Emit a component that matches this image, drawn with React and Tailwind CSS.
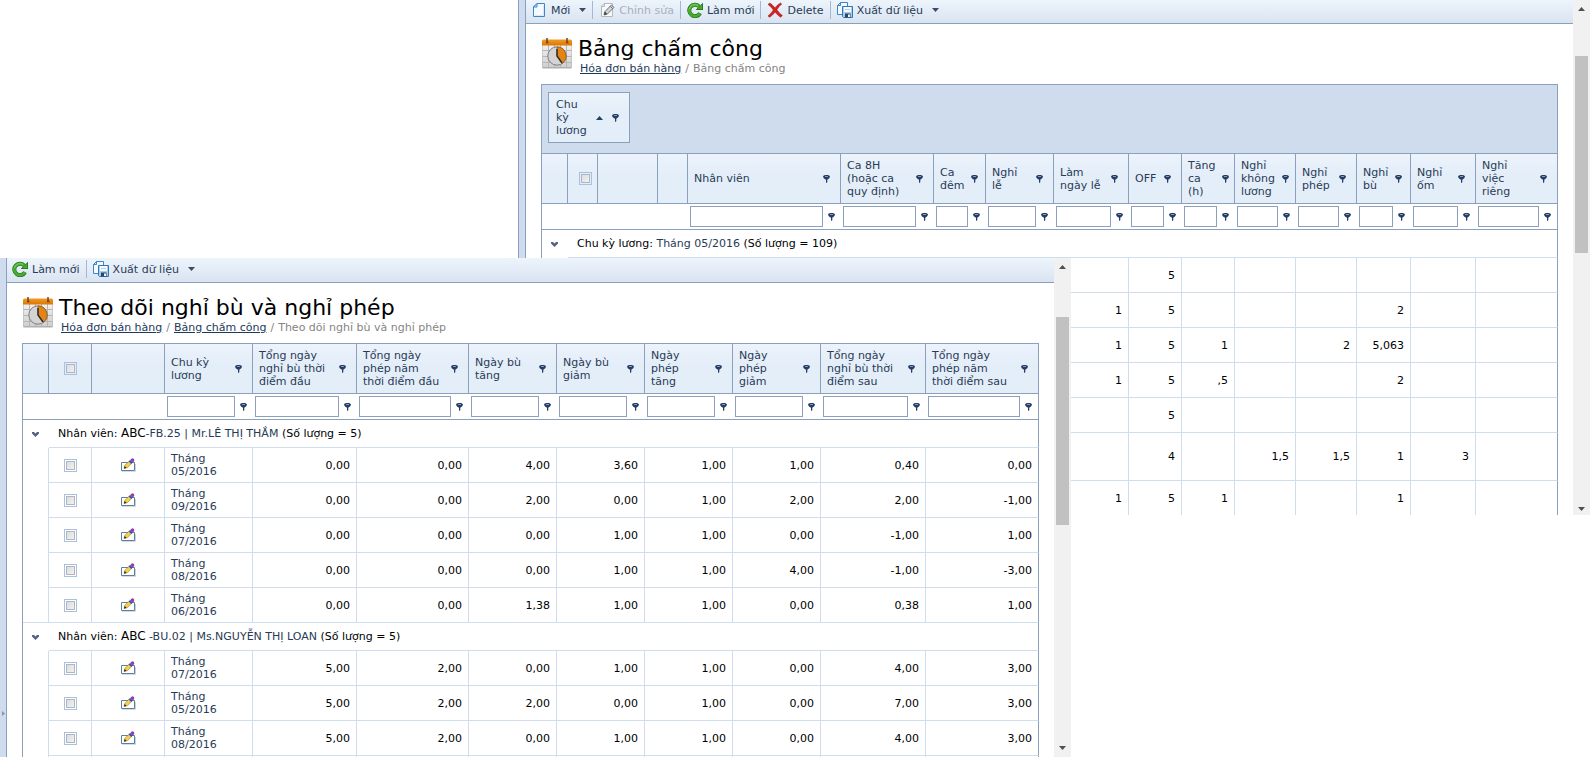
import React from "react";

/* ---------- icons ---------- */

function FilterIcon() {
  return (
    <svg width="7" height="8" viewBox="0 0 7 8" aria-hidden="true">
      <path d="M2 0h3q2 .4 2 1.800Q6.600 3.600 4.600 4.600H2.400Q.400 3.600 0 1.800 0 .4 2 0z" fill="#243c66" />
      <path d="M2 1h3v.700h-3z" fill="#b4c6e0" />
      <path d="M3 4h1.300v3.200L3 8z" fill="#243c66" />
    </svg>
  );
}

function Caret() {
  return (
    <svg width="7" height="4" viewBox="0 0 7 4" aria-hidden="true">
      <path d="M0 0h7L3.5 4z" fill="#3f4b66" />
    </svg>
  );
}

function SortUp() {
  return (
    <svg width="7" height="4" viewBox="0 0 7 4" aria-hidden="true">
      <path d="M0 4h7L3.5 0z" fill="#243c66" />
    </svg>
  );
}

function Chevron() {
  return (
    <svg width="7" height="5" viewBox="0 0 7 5" aria-hidden="true">
      <path d="M0 0h2l1.5 1.5L5 0h2v1.5L3.5 5 0 1.5z" fill="#55617f" />
    </svg>
  );
}

function NewIcon() {
  return (
    <svg width="16" height="16" viewBox="0 0 16 16" aria-hidden="true">
      <path d="M6 1.500h7.500v13h-11V5z" fill="#f4faff" stroke="#3f86c6" />
      <path d="M2.500 5H6V1.500z" fill="#d3e6f7" stroke="#3f86c6" strokeLinejoin="round" />
      <path d="M4 13.500h8.500V3" fill="none" stroke="#d6e9f9" />
    </svg>
  );
}

function EditGrayIcon() {
  return (
    <svg width="16" height="16" viewBox="0 0 16 16" aria-hidden="true">
      <path d="M5 1.500h8.500v13h-11V4z" fill="#f8f9fa" stroke="#b4b8bd" />
      <path d="M2.500 4.500h3v-3" fill="#e2e4e7" stroke="#b4b8bd" />
      <path d="M5 13l.900-3.400L12.400 3l2.600 2.400-6.700 6.700z" fill="#d2d4d7" stroke="#6f7378" />
      <path d="M5 13l.900-3.400 2.400 2.500z" fill="#3f4347" />
      <path d="M11.200 4.200l2.500 2.500" stroke="#6f7378" />
    </svg>
  );
}

function RefreshIcon() {
  return (
    <svg width="16" height="16" viewBox="0 0 16 16" aria-hidden="true">
      <path d="M12 4.400A5.700 5.700 0 1 0 13 11.200" fill="none" stroke="#1f6d16" strokeWidth="4" />
      <path d="M16 .800V8H8.600z" fill="#1f6d16" />
      <path d="M12 4.400A5.700 5.700 0 1 0 13 11.200" fill="none" stroke="#46ad2e" strokeWidth="2.800" />
      <path d="M15.300 2.600V7.300H10.400z" fill="#46ad2e" />
      <path d="M11 3.400A6 6 0 0 0 2.200 7" fill="none" stroke="#86cf6c" strokeWidth="1" />
    </svg>
  );
}

function DeleteIcon() {
  return (
    <svg width="16" height="16" viewBox="0 0 16 16" aria-hidden="true">
      <path
        d="M1 2.400 2.800 1C4.800 2.300 6.600 4 8 5.900 9.600 3.800 11.400 2.100 13.600 1L14.700 2C12.800 3.600 11.200 5.500 9.900 7.700 11.400 9.900 13.200 11.900 15.400 13.600L13.500 15.200C11.400 13.800 9.600 12 8.100 10.100 6.600 12.100 4.800 13.900 2.700 15.200L1 14C3 12.200 4.900 10.200 6.300 7.900 4.900 5.800 3.100 4 1 2.400z"
        fill="#d3201f"
        stroke="#9c1110"
        strokeWidth="0.5"
      />
    </svg>
  );
}

function ExportIcon() {
  return (
    <svg width="16" height="16" viewBox="0 0 16 16" aria-hidden="true">
      <path d="M3.500 0.500h7v12h-10v-9z" fill="#f4f9fe" stroke="#3f86c6" />
      <path d="M0.500 3.500h3v-3z" fill="#cfe2f5" stroke="#3f86c6" />
      <path d="M5.500 4.500h10v11h-9l-1-1z" fill="#a9cdef" stroke="#2f78bd" />
      <rect x="7" y="5" width="7" height="5" fill="#f6fafe" />
      <path d="M8 7.500h5" stroke="#b5cfe8" />
      <path d="M8 11.500h5.500v4H8z" fill="#2b4662" />
      <rect x="11" y="12.500" width="2" height="2.500" fill="#eef3f8" />
    </svg>
  );
}

function EditRowIcon() {
  return (
    <svg width="15" height="14" viewBox="0 0 15 14" aria-hidden="true">
      <path d="M1 13.300h13.500V6" fill="none" stroke="#c9d3dc" />
      <path d="M0.500 4.500h13v8H0.500z" fill="#fff" stroke="#5f7f9b" />
      <path d="M3 10.500l.900-3.300 4.500-4.400 2.600 2.500-4.600 4.400z" fill="#f6cf45" stroke="#6b5a2e" strokeWidth="0.400" />
      <path d="M3 10.500l.700-2.400 1.800 1.800z" fill="#1c1c1c" />
      <path d="M7.600 3.500l1.700-1.600 2.600 2.500-1.700 1.600z" fill="#2b55cf" />
      <path d="M9.300 1.900l1.100-1.100q1.200-.900 2.200 0t.400 2.400L11.900 4.400z" fill="#9b3aa0" />
    </svg>
  );
}

function CalendarIcon({ id }) {
  return (
    <svg width="32" height="32" viewBox="0 0 32 32" aria-hidden="true">
      <defs>
        <linearGradient id={id} x1="0" y1="0" x2="0" y2="1">
          <stop offset="0" stopColor="#f39a25" />
          <stop offset="1" stopColor="#dc7503" />
        </linearGradient>
        <linearGradient id={`${id}-paper`} x1="0" y1="0" x2="0" y2="1">
          <stop offset="0" stopColor="#f1f1f1" />
          <stop offset="1" stopColor="#cfcfcf" />
        </linearGradient>
      </defs>
      <rect x="1" y="5" width="30" height="26.500" rx="1.500" fill="#b0b0b0" />
      <rect x="1.500" y="8" width="29" height="22" fill={`url(#${id}-paper)`} />
      <path d="M1.500 13.500h29M1.500 19.500h29M1.500 25.500h29M7.500 8v22M13.500 8v22M19.500 8v22M25.500 8v22" stroke="#b5b5b5" />
      <path d="M1 8.500V4q0-1.500 1.500-1.500h27Q31 2.500 31 4v4.500z" fill={`url(#${id})`} />
      <path d="M6 1v4M26 1v4" stroke="#5a4a3a" strokeWidth="1.500" />
      <path d="M5 5.500h2.500M25 5.500h2.500" stroke="#7a4400" strokeWidth="1.500" />
      <circle cx="16" cy="19" r="9.200" fill="#d4d4d4" stroke="#7c7c7c" />
      <path d="M16 19V10a9 9 0 0 1 5.400 16.200z" fill="#e58414" stroke="#8a5312" strokeWidth="0.700" />
      <path d="M16 12v7l5 7" fill="none" stroke="#2f2f2f" strokeWidth="1.500" />
    </svg>
  );
}

/* ---------- shared parts ---------- */

function ToolButton({ icon, label, menu, disabled }) {
  return (
    <button
      type="button"
      disabled={disabled}
      className="flex h-[18px] items-center gap-1 text-[#283b56] disabled:text-[#a9b0ba]"
    >
      {icon}
      <span>{label}</span>
      {menu && (
        <span className="pl-[5px]">
          <Caret />
        </span>
      )}
    </button>
  );
}

function Toolbar({ items, className }) {
  return (
    <div
      role="toolbar"
      className={`flex items-start gap-[6px] border-b border-[#8ba0bc] bg-linear-to-b from-[#edf4fc] to-[#d9e4f1] pl-[5px] ${className}`}
    >
      {items.map((item, i) => (
        <React.Fragment key={item.label}>
          {i > 0 && <div className="h-[18px] w-px bg-[#a3b8d6]" />}
          <ToolButton {...item} />
        </React.Fragment>
      ))}
    </div>
  );
}

function PageTitle({ id, title, links, current }) {
  return (
    <header className="flex h-[60px] gap-[5px] pt-[13px]">
      <CalendarIcon id={id} />
      <div>
        <h1 className="text-[22px] leading-[24px] text-black">{title}</h1>
        <nav className="pl-[2px] leading-[16px] text-[#848484]">
          {links.map((link) => (
            <React.Fragment key={link}>
              <a href="#" className="text-[#1e395b] underline">
                {link}
              </a>
              <span className="px-1">/</span>
            </React.Fragment>
          ))}
          <span>{current}</span>
        </nav>
      </div>
    </header>
  );
}

function Tick({ label }) {
  return (
    <input
      type="checkbox"
      aria-label={label}
      className="mx-auto block size-[9px] appearance-none border border-[#b1b5bd] bg-linear-to-br from-[#dcdde0] to-[#f1f1f1] outline-1 outline-offset-1 outline-[#a9c0e0]"
    />
  );
}

function ScrollBar({ thumb, className }) {
  return (
    <div className={`flex w-[17px] shrink-0 flex-col bg-[#f1f1f1] ${className}`} aria-hidden="true">
      <svg width="17" height="17" viewBox="0 0 17 17" className="shrink-0">
        <path d="M5 11h7L8.500 7z" fill="#505050" />
      </svg>
      <div className={`mx-[2px] bg-[#c1c1c1] ${thumb}`} />
      <div className="grow" />
      <svg width="17" height="17" viewBox="0 0 17 17" className="shrink-0">
        <path d="M5 6h7L8.500 10z" fill="#505050" />
      </svg>
    </div>
  );
}

function Grid({ columns, children }) {
  const last = columns.length - 1;
  return (
    <table className="w-full table-fixed border-separate border-spacing-0">
      <colgroup>
        {columns.map((c, i) => (
          <col key={i} className={c.width} />
        ))}
      </colgroup>
      <thead>
        <tr>
          {columns.map((c, i) => (
            <th
              key={i}
              scope="col"
              className={`h-[50px] border-r border-b border-[#8ba0bc] bg-linear-to-b from-[#ecf3fb] to-[#e4eef9] to-40% py-0 pr-0 text-left font-normal text-[#283b56] ${c.tickPad ?? "pl-0"}`}
            >
              {c.tick && <Tick label="Chọn tất cả" />}
              {c.title && (
                <div className="flex items-center justify-between gap-[7px] pr-[10px] pl-[6px]">
                  <span className="whitespace-pre">{c.title}</span>
                  <button type="button" aria-label="Lọc" className="shrink-0">
                    <FilterIcon />
                  </button>
                </div>
              )}
            </th>
          ))}
        </tr>
        <tr>
          {columns.map((c, i) => (
            <td
              key={i}
              className={`h-[26px] border-b border-[#8ba0bc] p-0 ${i === last ? "border-r" : ""}`}
            >
              {c.title && (
                <div className="flex items-center pr-px pl-[2px]">
                  <input
                    type="text"
                    aria-label={c.title.replaceAll("\n", " ")}
                    className="h-[21px] w-0 min-w-0 grow border border-[#8ba0bc] bg-white px-1"
                  />
                  <button type="button" aria-label="Điều kiện lọc" className="flex w-[17px] shrink-0 justify-center">
                    <FilterIcon />
                  </button>
                </div>
              )}
            </td>
          ))}
        </tr>
      </thead>
      {children}
    </table>
  );
}

function GroupRow({ span, children }) {
  return (
    <tr>
      <td className="h-[28px] p-0">
        <button type="button" aria-label="Thu gọn" className="ml-[9px] block">
          <Chevron />
        </button>
      </td>
      <td
        colSpan={span}
        className="border-r border-b border-r-[#8ba0bc] border-b-[#cfddee] py-0 pl-[9px] text-black"
      >
        {children}
      </td>
    </tr>
  );
}

function cellBorder(isLast) {
  return isLast
    ? "border-r border-b border-r-[#8ba0bc] border-b-[#cfddee]"
    : "border-r border-b border-[#cfddee]";
}

/* ---------- data ---------- */

const timesheetColumns = [
  { width: "w-[26px]" },
  { width: "w-[30px]", tick: true, tickPad: "pl-[5px]" },
  { width: "w-[60px]" },
  { width: "w-[30px]" },
  { width: "w-[153px]", title: "Nhân viên" },
  { width: "w-[93px]", title: "Ca 8H\n(hoặc ca\nquy định)" },
  { width: "w-[52px]", title: "Ca\nđêm" },
  { width: "w-[68px]", title: "Nghỉ\nlễ" },
  { width: "w-[75px]", title: "Làm\nngày lễ" },
  { width: "w-[53px]", title: "OFF" },
  { width: "w-[53px]", title: "Tăng\nca\n(h)" },
  { width: "w-[61px]", title: "Nghỉ\nkhông\nlương" },
  { width: "w-[61px]", title: "Nghỉ\nphép" },
  { width: "w-[54px]", title: "Nghỉ\nbù" },
  { width: "w-[65px]", title: "Nghỉ\nốm" },
  { width: "w-[82px]", title: "Nghỉ\nviệc\nriêng" },
];

const timesheetRows = [
  { height: "h-[35px]", values: ["", "5", "", "", "", "", "", ""] },
  { height: "h-[35px]", values: ["1", "5", "", "", "", "2", "", ""] },
  { height: "h-[35px]", values: ["1", "5", "1", "", "2", "5,063", "", ""] },
  { height: "h-[35px]", values: ["1", "5", ",5", "", "", "2", "", ""] },
  { height: "h-[35px]", values: ["", "5", "", "", "", "", "", ""] },
  { height: "h-[48px]", values: ["", "4", "", "1,5", "1,5", "1", "3", ""] },
  { height: "h-[35px]", values: ["1", "5", "1", "", "", "1", "", ""] },
];

const leaveColumns = [
  { width: "w-[26px]" },
  { width: "w-[43px]", tick: true },
  { width: "w-[73px]" },
  { width: "w-[88px]", title: "Chu kỳ\nlương" },
  { width: "w-[104px]", title: "Tổng ngày\nnghỉ bù thời\nđiểm đầu" },
  { width: "w-[112px]", title: "Tổng ngày\nphép năm\nthời điểm đầu" },
  { width: "w-[88px]", title: "Ngày bù\ntăng" },
  { width: "w-[88px]", title: "Ngày bù\ngiảm" },
  { width: "w-[88px]", title: "Ngày\nphép\ntăng" },
  { width: "w-[88px]", title: "Ngày\nphép\ngiảm" },
  { width: "w-[105px]", title: "Tổng ngày\nnghỉ bù thời\nđiểm sau" },
  { width: "w-[113px]", title: "Tổng ngày\nphép năm\nthời điểm sau" },
];

const leaveGroups = [
  {
    label: "Nhân viên: ",
    company: "ABC",
    name: "-FB.25 | Mr.LÊ THỊ THẮM",
    complete: true,
    rows: [
      ["05/2016", "0,00", "0,00", "4,00", "3,60", "1,00", "1,00", "0,40", "0,00"],
      ["09/2016", "0,00", "0,00", "2,00", "0,00", "1,00", "2,00", "2,00", "-1,00"],
      ["07/2016", "0,00", "0,00", "0,00", "1,00", "1,00", "0,00", "-1,00", "1,00"],
      ["08/2016", "0,00", "0,00", "0,00", "1,00", "1,00", "4,00", "-1,00", "-3,00"],
      ["06/2016", "0,00", "0,00", "1,38", "1,00", "1,00", "0,00", "0,38", "1,00"],
    ],
  },
  {
    label: "Nhân viên: ",
    company: "ABC",
    name: " -BU.02 | Ms.NGUYỄN THỊ LOAN",
    complete: false,
    rows: [
      ["07/2016", "5,00", "2,00", "0,00", "1,00", "1,00", "0,00", "4,00", "3,00"],
      ["05/2016", "5,00", "2,00", "2,00", "0,00", "1,00", "0,00", "7,00", "3,00"],
      ["08/2016", "5,00", "2,00", "0,00", "1,00", "1,00", "0,00", "4,00", "3,00"],
    ],
  },
];

/* ---------- windows ---------- */

function TimesheetWindow() {
  return (
    <section className="absolute top-0 right-0 bottom-[242px] left-[518px] flex overflow-hidden bg-white">
      <div className="w-2 shrink-0 border-x border-[#8ba0bc] bg-[#cfdcee]" />
      <div className="min-w-0 grow">
        <Toolbar
          className="h-[24px] pt-px"
          items={[
            { icon: <NewIcon />, label: "Mới", menu: true },
            { icon: <EditGrayIcon />, label: "Chỉnh sửa", disabled: true },
            { icon: <RefreshIcon />, label: "Làm mới" },
            { icon: <DeleteIcon />, label: "Delete" },
            { icon: <ExportIcon />, label: "Xuất dữ liệu", menu: true },
          ]}
        />
        <div className="px-[15px]">
          <PageTitle id="cal-a" title="Bảng chấm công" links={["Hóa đơn bán hàng"]} current="Bảng chấm công" />
          <div className="border-t border-l border-[#8ba0bc]">
            <div className="border-r border-b border-[#8ba0bc] bg-[#cfdcee] pt-[7px] pb-[10px] pl-[6px]">
              <div className="flex h-[51px] w-[82px] items-center border border-[#8ba0bc] bg-linear-to-b from-[#ecf3fb] to-[#e4eef9] to-40% pr-[10px] pl-[7px] text-[#283b56]">
                <span className="grow whitespace-pre">{"Chu\nkỳ\nlương"}</span>
                <button type="button" aria-label="Sắp xếp" className="pr-[9px]">
                  <SortUp />
                </button>
                <button type="button" aria-label="Lọc">
                  <FilterIcon />
                </button>
              </div>
            </div>
            <Grid columns={timesheetColumns}>
              <tbody>
                <GroupRow span={15}>
                  Chu kỳ lương: <span className="text-[#283b56]">Tháng 05/2016</span> (Số lượng = 109)
                </GroupRow>
                {timesheetRows.map((row, r) => (
                  <tr key={r}>
                    <td className={`border-r border-[#cfddee] p-0 ${row.height}`} />
                    {["", "", "", "", "", "", "", ...row.values].map((v, i, all) => (
                      <td
                        key={i}
                        className={`py-0 pr-[6px] pl-0 text-right text-black ${cellBorder(i === all.length - 1)}`}
                      >
                        {v}
                      </td>
                    ))}
                  </tr>
                ))}
              </tbody>
            </Grid>
          </div>
        </div>
      </div>
      <ScrollBar thumb="mt-[39px] h-[197px]" className="-mb-[3px]" />
    </section>
  );
}

function LeaveWindow() {
  return (
    <section className="absolute top-[258px] right-[519px] bottom-0 left-0 flex overflow-hidden bg-white">
      <div className="flex w-[7px] shrink-0 items-end border-r border-[#8ba0bc] bg-[#cfdcee] pb-[41px] pl-[2px]">
        <svg width="3" height="5" viewBox="0 0 3 5" aria-hidden="true">
          <path d="M0 0l3 2.500L0 5z" fill="#7e95b8" />
        </svg>
      </div>
      <div className="min-w-0 grow">
        <Toolbar
          className="h-[25px] pt-[2px]"
          items={[
            { icon: <RefreshIcon />, label: "Làm mới" },
            { icon: <ExportIcon />, label: "Xuất dữ liệu", menu: true },
          ]}
        />
        <div className="px-[15px]">
          <PageTitle
            id="cal-b"
            title="Theo dõi nghỉ bù và nghỉ phép"
            links={["Hóa đơn bán hàng", "Bảng chấm công"]}
            current="Theo dõi nghỉ bù và nghỉ phép"
          />
          <div className="border-t border-l border-[#8ba0bc]">
            <Grid columns={leaveColumns}>
              {leaveGroups.map((group) => (
                <tbody key={group.name}>
                  <GroupRow span={11}>
                    {group.label}
                    <span className="text-[12px] leading-[12px]">{group.company}</span>
                    <span className="text-[#283b56]">{group.name}</span> (Số lượng = 5)
                  </GroupRow>
                  {group.rows.map(([month, ...values], r) => (
                    <tr key={month}>
                      <td
                        className={`h-[35px] border-r border-[#cfddee] p-0 ${
                          group.complete && r === group.rows.length - 1 ? "border-b" : ""
                        }`}
                      />
                      <td className={`p-0 ${cellBorder(false)}`}>
                        <Tick label={`Chọn tháng ${month}`} />
                      </td>
                      <td className={`p-0 ${cellBorder(false)}`}>
                        <button type="button" aria-label={`Sửa tháng ${month}`} className="mx-auto block">
                          <EditRowIcon />
                        </button>
                      </td>
                      <td className={`py-0 pr-0 pl-[6px] text-[#283b56] ${cellBorder(false)}`}>
                        Tháng
                        <br />
                        {month}
                      </td>
                      {values.map((v, i) => (
                        <td
                          key={i}
                          className={`py-0 pr-[6px] pl-0 text-right text-black ${cellBorder(i === values.length - 1)}`}
                        >
                          {v}
                        </td>
                      ))}
                    </tr>
                  ))}
                  {!group.complete && (
                    <tr>
                      <td className="h-[35px] border-r border-[#cfddee]" />
                      {leaveColumns.slice(1).map((column, i, all) => (
                        <td key={i} className={cellBorder(i === all.length - 1)} />
                      ))}
                    </tr>
                  )}
                </tbody>
              ))}
            </Grid>
          </div>
        </div>
      </div>
      <ScrollBar thumb="mt-[42px] h-[208px]" className="" />
    </section>
  );
}

export default function App() {
  return (
    <main className="relative h-screen overflow-hidden bg-white font-['DejaVu_Sans','Verdana',sans-serif] text-[11px] leading-[13px]">
      <TimesheetWindow />
      <LeaveWindow />
    </main>
  );
}
